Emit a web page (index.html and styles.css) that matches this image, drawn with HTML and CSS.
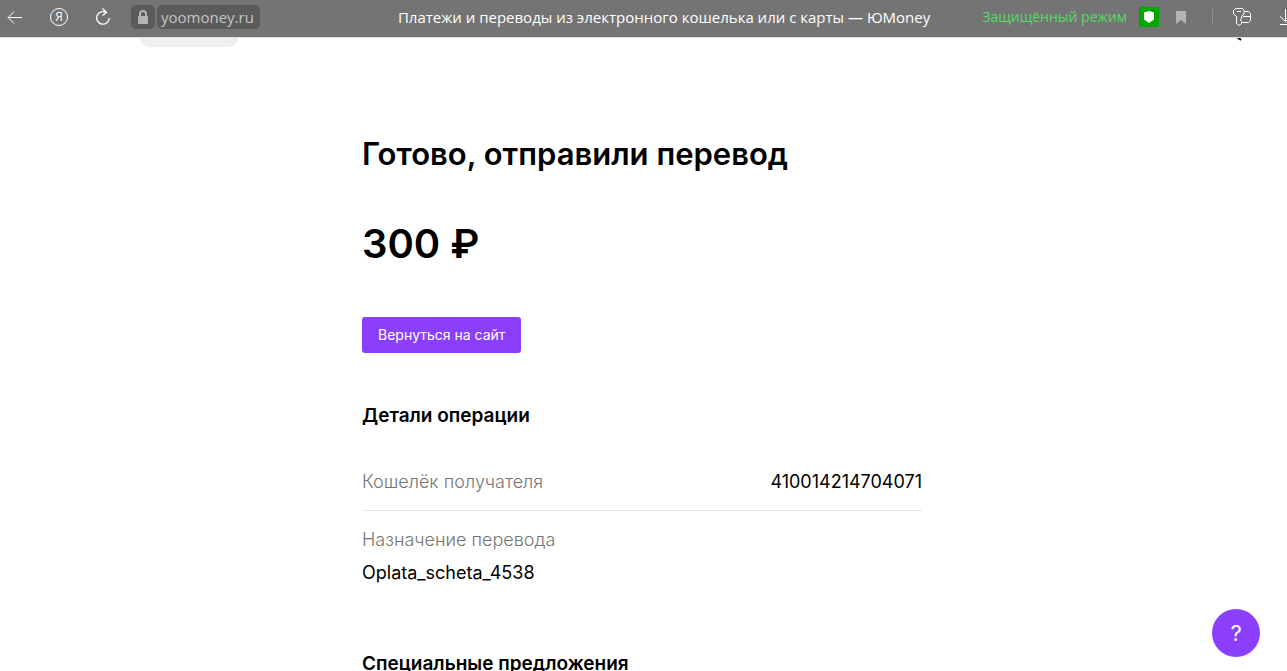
FILE: index.html
```html
<!DOCTYPE html>
<html lang="ru">
<head>
  <meta charset="UTF-8">
  <meta name="viewport" content="width=device-width, initial-scale=1.0">
  <title>Платежи и переводы из электронного кошелька или с карты — ЮMoney</title>
  <link rel="stylesheet" href="styles.css">
</head>
<body>
  <header class="browser">
    <nav class="nav">
      <button class="icon-btn" aria-label="Назад">
        <svg width="16" height="16" viewBox="0 0 16 16"><path d="M16 8.500H2M8 2.500l-6 6 6 6"/></svg>
      </button>
      <button class="icon-btn yandex" aria-label="Яндекс">Я</button>
      <button class="icon-btn" aria-label="Обновить">
        <svg width="14" height="18" viewBox="0 0 14 18"><path d="M13.300 10a6.300 6.300 0 1 1-3-5.500M6.500 0.500l4 4L6.500 7.500" stroke-width="1.300"/></svg>
      </button>
    </nav>
    <div class="address">
      <span class="lock">
        <svg width="12" height="14" viewBox="0 0 12 14"><rect x="1" y="6" width="10" height="8" rx="1" class="fill"/><path d="M3 7V4a3 3 0 0 1 6 0v3" class="shackle"/></svg>
      </span>
      <a class="domain" href="#">yoomoney.ru</a>
    </div>
    <div class="page-title">Платежи и переводы из электронного кошелька или с карты — ЮMoney</div>
    <div class="tools">
      <span class="secure">Защищённый режим</span>
      <span class="shield">
        <svg width="10" height="12" viewBox="0 0 10 12"><path d="M5 0l5 1.500V8.500L5 12 0 8.500V1.500z" fill="#fff" stroke="none"/></svg>
      </span>
      <button class="icon-btn bookmark" aria-label="Закладка">
        <svg width="10" height="13" viewBox="0 0 10 13"><path d="M0 0h10v13L5 9l-5 4z" class="fill"/></svg>
      </button>
      <span class="divider"></span>
      <button class="icon-btn passwords" aria-label="Пароли">
        <svg width="19" height="18" viewBox="0 0 19 18"><path d="M2.500 .5h7l1.500 2v3.500L8.500 8.500v2l-1 1.500 1 1.500v2L6 17.500 3.500 15.500V8.500L.5 6V2.500zM4 3.500h4M11.500 3.500h4l2 2v7l-2 2h-7M10 8.500h7.500"/></svg>
      </button>
      <button class="icon-btn" aria-label="Загрузки">
        <svg width="18" height="16" viewBox="0 0 18 16"><path d="M5.500 0v12M0 7.500l5.500 5 5.500-5M0 15.500h12"/></svg>
      </button>
    </div>
  </header>

  <div class="page">
    <div class="page-top">
      <span class="pill"></span>
      <svg class="marker" width="6" height="3" viewBox="0 0 6 3"><path d="M1 -1l4 3"/></svg>
    </div>

    <main class="content">
      <h1>Готово, отправили перевод</h1>
      <p class="amount">300 ₽</p>
      <button class="back">Вернуться на сайт</button>

      <h2>Детали операции</h2>
      <dl class="details">
        <div class="row">
          <dt>Кошелёк получателя</dt>
          <dd>410014214704071</dd>
        </div>
        <div class="row stacked">
          <dt>Назначение перевода</dt>
          <dd>Oplata_scheta_4538</dd>
        </div>
      </dl>

      <h2>Специальные предложения</h2>
    </main>
  </div>

  <button class="help" aria-label="Помощь">?</button>
</body>
</html>
```

FILE: styles.css
```css
* {
  box-sizing: border-box;
}

body {
  margin: 0;
  height: 100vh;
  overflow: hidden;
  background-color: #fff;
  color: #000;
  font-family: Inter, "Liberation Sans", sans-serif;
}

button {
  padding: 0;
  border: 0;
  background: none;
  font-family: inherit;
  cursor: pointer;
}

svg {
  display: block;
  fill: none;
  stroke: #fff;
}

h1, h2, p, dl, dd {
  margin: 0;
}

/* browser bar */
.browser {
  display: flex;
  align-items: center;
  height: 38px;
  padding: 0 0 3px 6px;
  overflow: hidden;
  background-color: #747474;
  border-bottom: 1px solid #dedede;
  color: #fff;
  font-family: "Open Sans", "Noto Sans", sans-serif;
  font-size: 15px;
  line-height: 24px;
  white-space: nowrap;
}

.nav {
  display: flex;
  align-items: center;
  gap: 28px;
}

.icon-btn {
  flex: none;
  color: #fff;
}

.yandex {
  width: 18px;
  height: 18px;
  border: 1px solid #fff;
  border-radius: 50%;
  font-family: "Open Sans", sans-serif;
  font-size: 12px;
  line-height: 16px;
}

.address {
  display: flex;
  gap: 2px;
  margin-left: 21px;
  color: #c4c4c4;
}

.lock, .domain {
  height: 24px;
  border-radius: 5px;
  background-color: #5b5b5b;
}

.lock {
  display: flex;
  align-items: center;
  justify-content: center;
  width: 24px;
}

.fill {
  fill: #b4b4b4;
  stroke: none;
}

.shackle {
  stroke: #b4b4b4;
  stroke-width: 2;
}

.domain {
  padding: 0 6px 0 4px;
  color: inherit;
  text-decoration: none;
}

.page-title {
  margin-left: auto;
  margin-right: 52px;
}

.tools {
  display: flex;
  align-items: center;
  margin-right: -11px;
}

.secure {
  color: #58d964;
  font-size: 14px;
}

.shield {
  display: flex;
  align-items: center;
  justify-content: center;
  width: 20px;
  height: 20px;
  margin: 0 17px 0 12px;
  background-color: #00a800;
}

.divider {
  width: 1px;
  height: 16px;
  margin: 0 20px 0 26px;
  background-color: #919191;
}

.passwords {
  margin-right: 28px;
}

/* page */
.page {
  padding-right: 3px;
}

.page-top {
  display: flex;
  align-items: flex-start;
  justify-content: space-between;
  height: 92px;
  padding: 0 42px 0 140px;
}

.pill {
  width: 98px;
  height: 9px;
  border-radius: 0 0 20px 20px;
  background-color: #efefef;
}

.marker {
  stroke: #000;
  stroke-width: 2;
}

.content {
  max-width: 560px;
  margin: 0 auto;
}

h1 {
  font-size: 31px;
  font-weight: 600;
  line-height: 48px;
}

.amount {
  margin: 36px 0 43px;
  font-size: 40px;
  font-weight: 600;
  line-height: 60px;
}

.back {
  display: block;
  height: 36px;
  padding: 0 16px;
  border-radius: 3px;
  background-color: #8b3ffd;
  color: #fff;
  font-size: 14px;
  line-height: 36px;
}

h2 {
  margin-top: 49px;
  font-size: 19px;
  font-weight: 600;
  line-height: 28px;
}

.details {
  margin-top: 23px;
  font-size: 18px;
  line-height: 33px;
}

.row {
  display: flex;
  justify-content: space-between;
  padding: 12px 0;
  border-bottom: 1px solid #e8e8e8;
}

.stacked {
  display: block;
  border-bottom: 0;
}

dt {
  color: #757575;
  font-weight: 300;
}

.help {
  position: fixed;
  right: 27px;
  bottom: 14px;
  width: 48px;
  height: 48px;
  border-radius: 50%;
  background-color: #8b3ffd;
  color: #fff;
  font-size: 22px;
}
```
